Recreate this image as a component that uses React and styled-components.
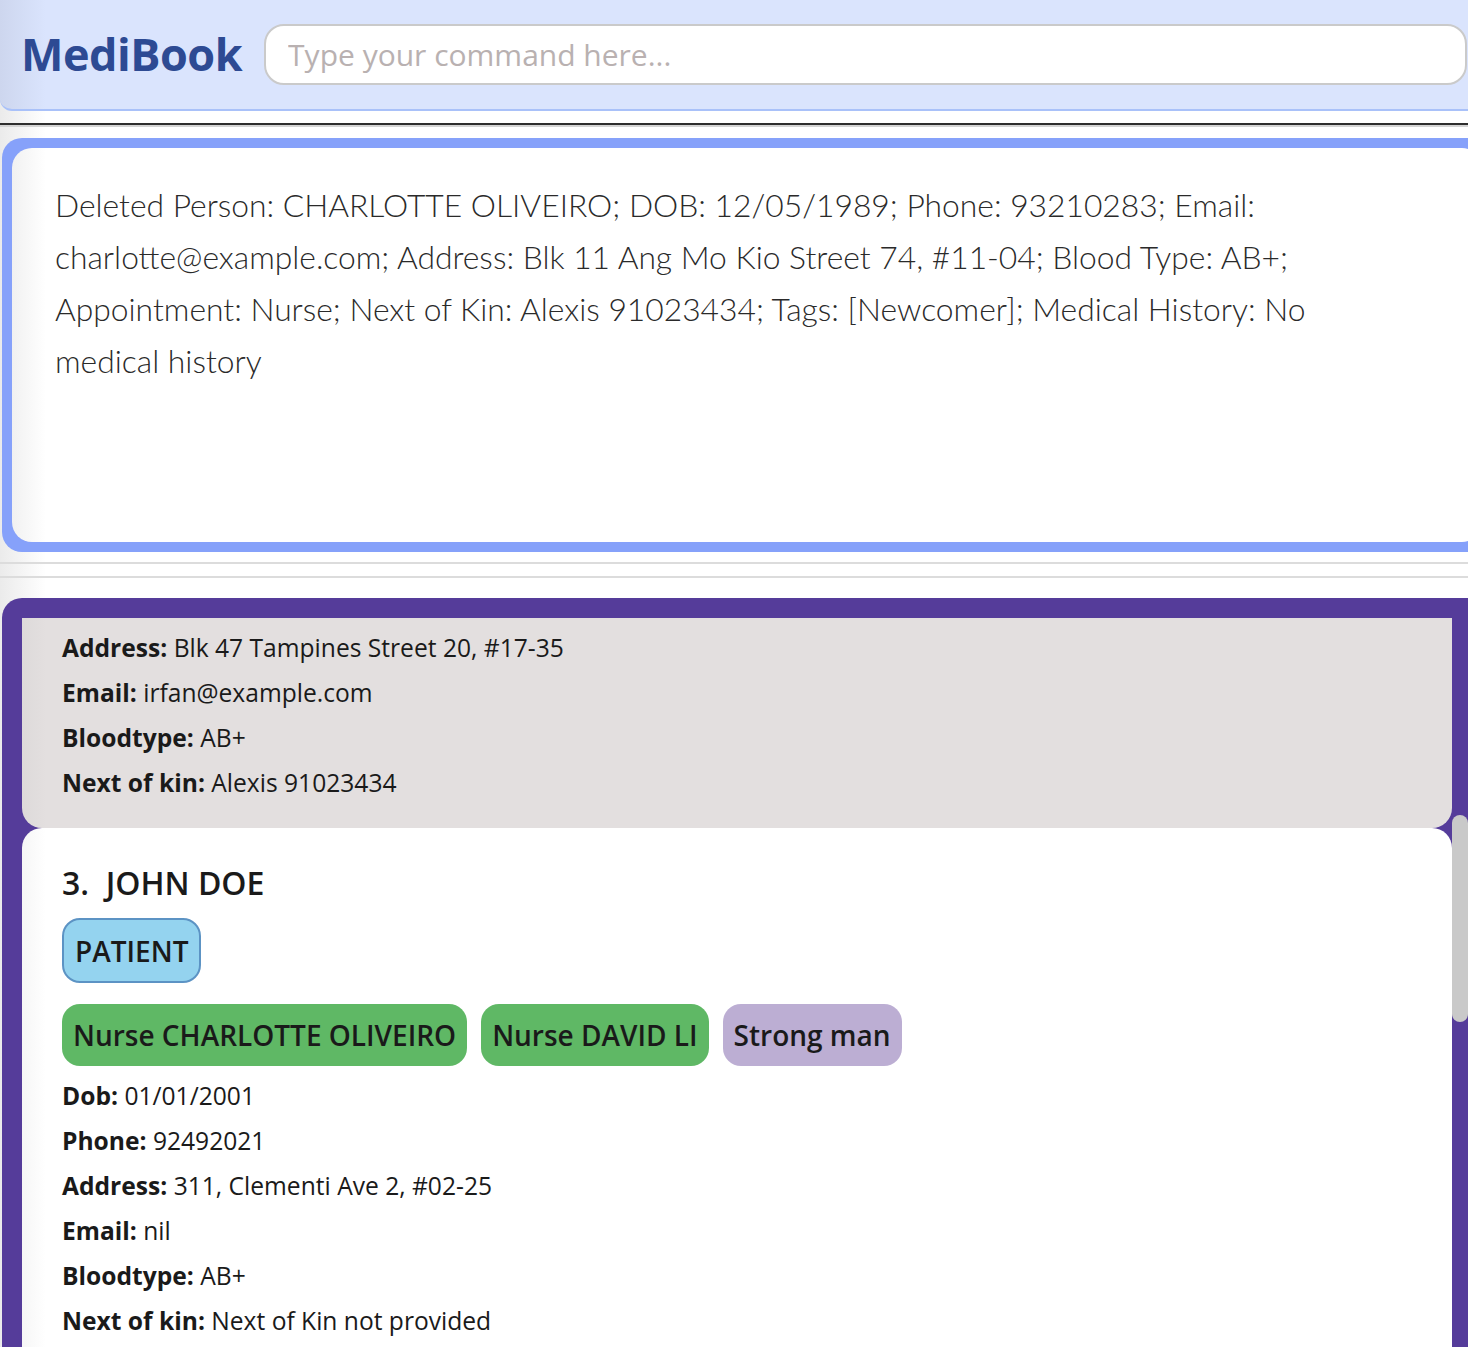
import styled, { createGlobalStyle } from 'styled-components'

const GlobalStyle = createGlobalStyle`
  html, body {
    margin: 0;
    padding: 0;
    overflow: hidden;
  }
  body {
    background: linear-gradient(90deg, #ebebeb 0, #ffffff 46px) fixed;
    font-family: "Open Sans", "Noto Sans", sans-serif;
    color: #1a1a1a;
  }
`

const shade = (base, edge) => `linear-gradient(90deg, ${edge} 0, ${base} 46px) fixed`

const resultText = 'Deleted Person: CHARLOTTE OLIVEIRO; DOB: 12/05/1989; Phone: 93210283; Email: charlotte@example.com; Address: Blk 11 Ang Mo Kio Street 74, #11-04; Blood Type: AB+; Appointment: Nurse; Next of Kin: Alexis 91023434; Tags: [Newcomer]; Medical History: No medical history'

const previousFields = [
    ['Address', 'Blk 47 Tampines Street 20, #17-35'],
    ['Email', 'irfan@example.com'],
    ['Bloodtype', 'AB+'],
    ['Next of kin', 'Alexis 91023434'],
]

const person = {
    index: 3,
    name: 'JOHN DOE',
    role: 'PATIENT',
    tags: [
        { label: 'Nurse CHARLOTTE OLIVEIRO', kind: 'appointment' },
        { label: 'Nurse DAVID LI', kind: 'appointment' },
        { label: 'Strong man', kind: 'tag' },
    ],
    fields: [
        ['Dob', '01/01/2001'],
        ['Phone', '92492021'],
        ['Address', '311, Clementi Ave 2, #02-25'],
        ['Email', 'nil'],
        ['Bloodtype', 'AB+'],
        ['Next of kin', 'Next of Kin not provided'],
    ],
}

const Field = ({ label, value }) => (
    <FieldRow>
        <Label>{label}:</Label> {value}
    </FieldRow>
)

const App = () => {
    return (<Window>
        <GlobalStyle />
        <TopBar>
            <Logo>MediBook</Logo>
            <CommandBox placeholder="Type your command here..." />
        </TopBar>
        <Divider />

        <ResultFrame>
            <ResultInner>
                <ResultText>{resultText}</ResultText>
            </ResultInner>
        </ResultFrame>

        <SplitLines />

        <ListPanel>
            <ListScroll>
                <PrevCard>
                    {previousFields.map(([l, v]) => <Field key={l} label={l} value={v} />)}
                </PrevCard>
                <PersonCard>
                    <Name>{person.index}.&nbsp;&nbsp;{person.name}</Name>
                    <RoleRow>
                        <RoleChip>{person.role}</RoleChip>
                    </RoleRow>
                    <TagRow>
                        {person.tags.map(t => <Tag key={t.label} $kind={t.kind}>{t.label}</Tag>)}
                    </TagRow>
                    {person.fields.map(([l, v]) => <Field key={l} label={l} value={v} />)}
                </PersonCard>
            </ListScroll>
            <ScrollTrack>
                <ScrollThumb />
            </ScrollTrack>
        </ListPanel>
    </Window>)
}

const Window = styled.div`
  width: 1500px;
  height: 1347px;
  overflow: hidden;
`

const TopBar = styled.div`
  height: 111px;
  display: flex;
  align-items: center;
  gap: 22px;
  padding: 0 0 0 21px;
  box-sizing: border-box;
  width: 1500px;
  background: ${shade('#dae4fd', '#cdd6ee')};
  border-bottom: 2px solid #a9c1f9;
  border-radius: 0 0 0 12px;
`

const Logo = styled.div`
  font-family: "Open Sans", sans-serif;
  font-weight: 700;
  font-size: 45px;
  color: #2d4a93;
  letter-spacing: -0.5px;
  padding-bottom: 2px;
`

const CommandBox = styled.input`
  width: 1203px;
  height: 61px;
  box-sizing: border-box;
  border: 2px solid #cacaca;
  border-radius: 20px;
  background: #fff;
  padding: 0 22px;
  font-family: "Open Sans", sans-serif;
  font-size: 30px;
  font-weight: 400;
  outline: none;

  &::placeholder {
    color: #b9b1b1;
  }
`

const Divider = styled.div`
  margin-top: 12px;
  height: 2px;
  background: #2e2e2e;
  border-bottom: 2px solid #d4d4d4;
`

const ResultFrame = styled.div`
  margin: 11px 0 0 2px;
  width: 1490px;
  height: 414px;
  box-sizing: border-box;
  padding: 10px;
  background: #86a1fa;
  border-radius: 20px;
`

const ResultInner = styled.div`
  height: 100%;
  box-sizing: border-box;
  background: ${shade('#ffffff', '#ececec')};
  border-radius: 20px;
  padding: 31px 0 0 43px;
`

const ResultText = styled.p`
  margin: 0;
  width: 1330px;
  font-family: Lato, "Open Sans", sans-serif;
  font-weight: 300;
  font-size: 31.8px;
  line-height: 52px;
  color: #2a2a2a;
`

const SplitLines = styled.div`
  margin-top: 10px;
  height: 12px;
  border-top: 2px solid #dcdcdc;
  border-bottom: 2px solid #dcdcdc;
`

const ListPanel = styled.div`
  margin: 20px 0 0 2px;
  height: 760px;
  background: #553c9a;
  border-radius: 20px 0 0 0;
  padding: 20px 0 0 20px;
  display: flex;
`

const ListScroll = styled.div`
  width: 1430px;
  display: flex;
  flex-direction: column;
`

const PrevCard = styled.div`
  background: ${shade('#e3dfdf', '#d8d5d5')};
  border-radius: 0 0 20px 20px;
  padding: 7px 40px 23px;
`

const FieldRow = styled.div`
  font-size: 24.6px;
  line-height: 45px;
  color: #1a1a1a;
  white-space: nowrap;
`

const Label = styled.span`
  font-weight: 700;
`

const PersonCard = styled.div`
  background: ${shade('#ffffff', '#eeeeee')};
  border-radius: 20px 20px 0 0;
  padding: 33px 40px 0;
  flex: 1;
`

const Name = styled.div`
  font-size: 32px;
  font-weight: 600;
  line-height: 44px;
  color: #1a1a1a;
`

const RoleRow = styled.div`
  display: flex;
  margin-top: 13px;
`

const RoleChip = styled.div`
  height: 65px;
  box-sizing: border-box;
  padding: 0 11px;
  display: flex;
  align-items: center;
  background: #94d3ef;
  border: 2px solid #5c93c4;
  border-radius: 18px;
  font-size: 28px;
  font-weight: 600;
  color: #1a1a1a;
`

const TagRow = styled.div`
  display: flex;
  gap: 14px;
  margin: 21px 0 7px;
`

const Tag = styled.div`
  height: 62px;
  padding: 0 11px;
  display: flex;
  align-items: center;
  border-radius: 18px;
  background: ${p => p.$kind === 'appointment' ? '#5fb865' : '#bcaed3'};
  font-size: 28px;
  font-weight: 600;
  color: #1a1a1a;
`

const ScrollTrack = styled.div`
  width: 16px;
  padding-top: 197px;
`

const ScrollThumb = styled.div`
  width: 16px;
  height: 207px;
  background: #c9c9c9;
  border-radius: 8px;
`

export default App
